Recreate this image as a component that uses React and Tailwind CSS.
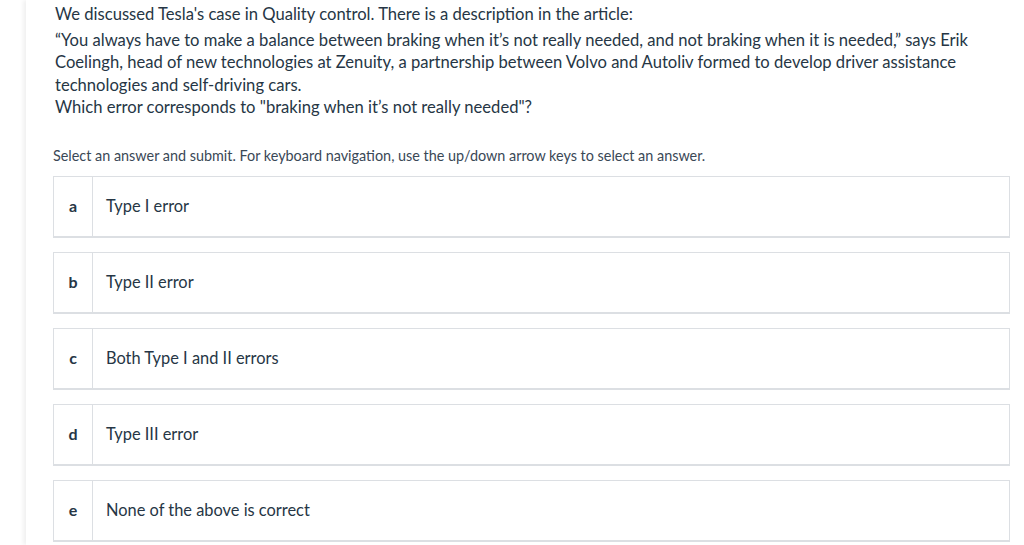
export default function App() {
  const answers = [
    ["a", "Type I error"],
    ["b", "Type II error"],
    ["c", "Both Type I and II errors"],
    ["d", "Type III error"],
    ["e", "None of the above is correct"],
  ];
  return (
    <div className="min-h-[545px] bg-white flex" style={{ fontFamily: "Lato, 'Noto Sans', sans-serif" }}>
      <div className="w-[26px] shrink-0 bg-white" />
      <div className="flex-1 bg-white shadow-[-3px_0_4px_rgba(0,0,0,0.06)] pl-[27px] pr-[14px] pt-[3px]">
        <div className="text-[16.6px] leading-[22.6px] text-[#263645] pl-[2px]">
          <p>We discussed Tesla's case in Quality control. There is a description in the article:</p>
          <p className="mt-[3px]">
            “You always have to make a balance between braking when it’s not really needed, and not braking when it is needed,” says Erik
            <br />
            Coelingh, head of new technologies at Zenuity, a partnership between Volvo and Autoliv formed to develop driver assistance
            <br />
            technologies and self-driving cars.
          </p>
          <p>Which error corresponds to "braking when it’s not really needed"?</p>
        </div>
        <p className="mt-[27px] text-[14.4px] leading-[20px] text-[#3a4856]">
          Select an answer and submit. For keyboard navigation, use the up/down arrow keys to select an answer.
        </p>
        <div className="mt-[10px] flex flex-col gap-[14px]">
          {answers.map(([l, t]) => (
            <div key={l} className="flex h-[62px] border border-[#dcdfe3] border-b-2">
              <div className="w-[39px] shrink-0 border-r border-[#dcdfe3] flex items-center justify-center text-[16px] font-bold text-[#263645]">
                {l}
              </div>
              <div className="flex items-center pl-[13px] text-[16.4px] text-[#263645]">{t}</div>
            </div>
          ))}
        </div>
      </div>
    </div>
  );
}
